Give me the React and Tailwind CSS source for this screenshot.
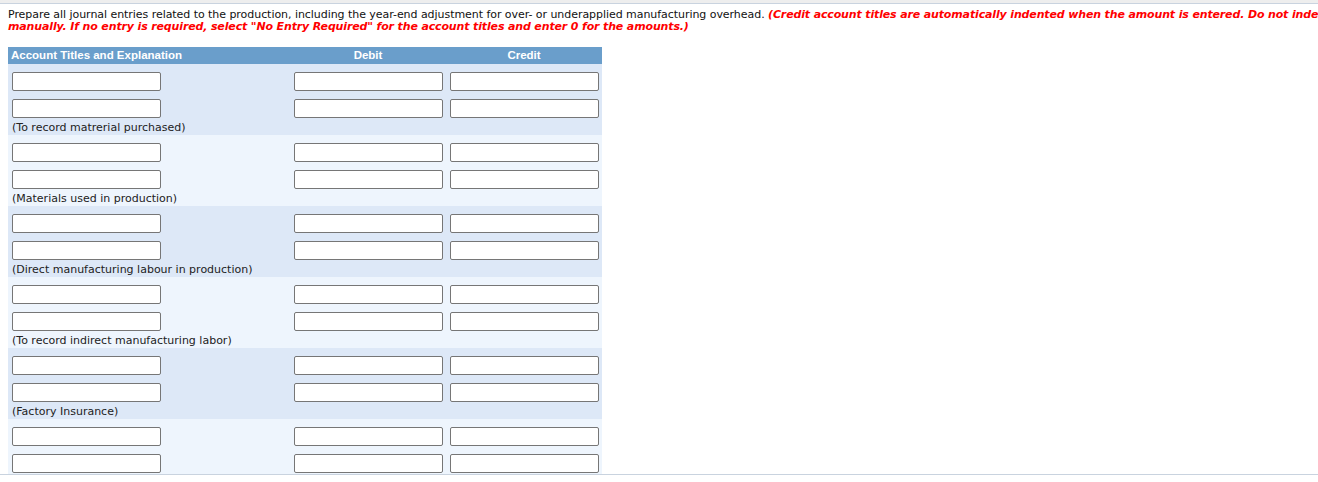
import React from "react";

const groups = [
  "(To record matrerial purchased)",
  "(Materials used in production)",
  "(Direct manufacturing labour in production)",
  "(To record indirect manufacturing labor)",
  "(Factory Insurance)",
  "",
];

function Inp() {
  return (
    <div className="h-[19px] w-[149px] rounded-[2px] border border-[#767676] bg-white box-border" />
  );
}

function Row() {
  return (
    <div className="flex h-[27px] items-center">
      <div className="w-[282px] pl-[4px]">
        <Inp />
      </div>
      <div className="w-[156px] pl-[4px]">
        <Inp />
      </div>
      <div className="w-[156px] pl-[4px]">
        <Inp />
      </div>
    </div>
  );
}

export default function App() {
  return (
    <div
      className="w-[1318px] h-[482px] bg-white overflow-hidden"
      style={{ fontFamily: '"DejaVu Sans", Verdana, sans-serif' }}
    >
      <div className="h-[3px] bg-[#eeeeee]" />
      <div className="h-[472px] overflow-hidden border-t border-b border-[#c9d3df] box-border">
        <div className="pl-[8px] pt-[5px] text-[11px] leading-[12px] text-[#111] whitespace-nowrap">
          <div className="tracking-[-0.05px]">
            Prepare all journal entries related to the production, including the year-end adjustment for over- or underapplied manufacturing overhead.{" "}
            <span className="text-[#ff0000] font-bold italic tracking-[-0.14px]">
              (Credit account titles are automatically indented when the amount is entered. Do not indent
            </span>
          </div>
          <div className="text-[#ff0000] font-bold italic tracking-[-0.14px]">
            manually. If no entry is required, select "No Entry Required" for the account titles and enter 0 for the amounts.)
          </div>
        </div>
        <div className="ml-[8px] mt-[14px] w-[594px]">
          <div
            className="flex h-[17px] items-center bg-[#6a9ecb] text-white font-bold text-[11.5px] leading-[17px]"
            style={{ fontFamily: '"Liberation Sans", Arial, sans-serif' }}
          >
            <div className="w-[282px] pl-[3px]">Account Titles and Explanation</div>
            <div className="w-[156px] text-center">Debit</div>
            <div className="w-[156px] text-center">Credit</div>
          </div>
          {groups.map((label, i) => (
            <div
              key={i}
              className={
                (i % 2 === 0 ? "bg-[#dde8f7]" : "bg-[#eef5fd]") + " pt-[4px]"
              }
            >
              <Row />
              <Row />
              <div className="h-[13px] pl-[4px] text-[11px] leading-[11px] text-[#222]">
                {label}
              </div>
            </div>
          ))}
        </div>
      </div>
    </div>
  );
}
